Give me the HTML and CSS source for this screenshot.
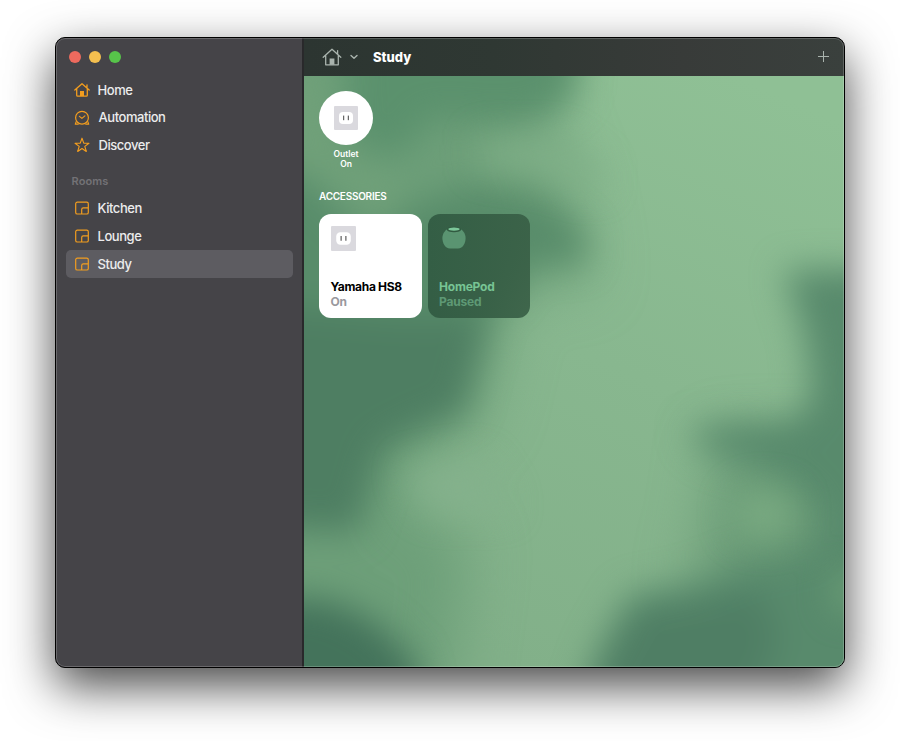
FILE: index.html
```html
<!DOCTYPE html>
<html lang="en">
<head>
<meta charset="utf-8">
<title>Home</title>
<link rel="stylesheet" href="styles.css">
</head>
<body>
<svg class="symbols" width="0" height="0" aria-hidden="true">
  <symbol id="house" viewBox="0 0 20 20">
    <path d="M1.2 10.2 10 2.2l8.8 8M3.7 8.6v9.2h12.6V8.6M15.6 6.8V3.6" fill="none" stroke="currentColor" stroke-width="1.3" stroke-linecap="round" stroke-linejoin="round"/>
    <path d="M7.6 11.4h4.8v6.4H7.6z" fill="currentColor"/>
  </symbol>
  <symbol id="room" viewBox="0 0 16 16">
    <rect x="1.7" y="2.2" width="12.6" height="11.8" rx="1.6" fill="none" stroke="currentColor" stroke-width="1.2"/>
    <path d="M14.2 7.9H9.3a1.6 1.6 0 0 0-1.6 1.6V14" fill="none" stroke="currentColor" stroke-width="1.2"/>
  </symbol>
  <symbol id="outlet" viewBox="0 0 24 24">
    <rect width="24" height="24" rx="1" fill="#dad9de"/>
    <rect x="5" y="6" width="14" height="12" rx="4" fill="#fff"/>
    <path d="M9.7 9.6v4.6M14.3 9.6v4.6" stroke="#444" stroke-width="1"/>
  </symbol>
</svg>

<div class="window">
  <aside class="sidebar">
    <div class="lights"><i class="red"></i><i class="yellow"></i><i class="green"></i></div>
    <nav>
      <a class="item"><svg viewBox="0 0 16 16" fill="none" stroke="currentColor" stroke-width="1.3" stroke-linecap="round" stroke-linejoin="round"><path d="M.8 8 8 1.7 15.2 8M2.7 6.8v6.400q0 1 1 1h8.600q1 0 1-1V6.800M13 5.200V2.800"/><path d="M6 9h4v5H6z" fill="currentColor" stroke="none"/></svg><span>Home</span></a>
      <a class="item wide"><svg viewBox="0 0 16 16" fill="none" stroke="currentColor" stroke-width="1.2" stroke-linecap="round" stroke-linejoin="round"><circle cx="8" cy="7.7" r="6.4"/><path d="M5.4 6.4l2.500 2 3-2.500M2.200 11.600 1.300 14.100h3M13.800 11.600l.9 2.500h-3"/></svg><span>Automation</span></a>
      <a class="item wide"><svg viewBox="0 0 16 16" fill="none" stroke="currentColor" stroke-width="1.15" stroke-linejoin="round"><path d="M8 1.2l1.75 4.9 5.2.15-4.15 3.15 1.5 5L8 11.5l-4.3 2.9 1.5-5L1.05 6.25l5.2-.15z"/></svg><span>Discover</span></a>
      <h2>Rooms</h2>
      <a class="item"><svg><use href="#room"/></svg><span>Kitchen</span></a>
      <a class="item"><svg><use href="#room"/></svg><span>Lounge</span></a>
      <a class="item selected"><svg><use href="#room"/></svg><span>Study</span></a>
    </nav>
  </aside>

  <main class="main">
    <header class="toolbar">
      <svg class="home"><use href="#house"/></svg>
      <svg class="chevron" viewBox="0 0 8 6"><path d="M1 1.4l3 2.9 3-2.9" fill="none" stroke="currentColor" stroke-width="1.4" stroke-linecap="round" stroke-linejoin="round"/></svg>
      <h1>Study</h1>
      <svg class="plus" viewBox="0 0 11 11"><path d="M5.5 0v11M0 5.5h11" stroke="currentColor"/></svg>
    </header>

    <section class="content">
      <svg class="wallpaper" viewBox="304 76 540 591" preserveAspectRatio="none">
        <defs>
          <linearGradient id="base" x1="0.8" y1="0" x2="0.4" y2="1">
            <stop offset="0" stop-color="#8fc095"/>
            <stop offset="0.5" stop-color="#88b78f"/>
            <stop offset="1" stop-color="#82b089"/>
          </linearGradient>
          <filter id="soft" filterUnits="userSpaceOnUse" x="150" y="-50" width="850" height="850" color-interpolation-filters="sRGB"><feGaussianBlur stdDeviation="17"/></filter>
          <filter id="softer" filterUnits="userSpaceOnUse" x="100" y="-100" width="950" height="950" color-interpolation-filters="sRGB"><feGaussianBlur stdDeviation="28"/></filter>
        </defs>
        <rect x="304" y="76" width="540" height="591" fill="url(#base)"/>
        <g filter="url(#softer)">
          <path d="M200 0H560L540 110 570 180 590 280 510 290 480 420 440 450 400 500 470 540 440 760H200z" fill="#6d9f79"/>
          <path d="M720 440 710 520 690 590 860 590 860 440z" fill="#699a76"/>
        </g>
        <g filter="url(#soft)">
          <path d="M345 20H580L576 95 545 118 500 124 430 118 405 155 350 150z" fill="#5b916d"/>
          <path d="M200 165 304 175 370 240 420 200 480 185 545 202 586 236 582 264 530 262 512 290 470 330 300 330 200 340z" fill="#588c6a"/>
          <path d="M200 300 400 318 490 318 475 370 465 412 420 430 382 450 358 532 200 524z" fill="#4e7e62"/>
          <path d="M200 595 330 600 375 622 415 660 420 720 200 720z" fill="#44735b"/>
          <path d="M784 270 900 268V720H574L597 652 630 594 690 583 750 560 806 550 822 522 800 490 760 468 710 452 686 430 730 424 790 424 812 400 806 340z" fill="#588a6c"/>
          <path d="M635 612 700 600 760 590 780 640 740 720 584 720 608 650z" fill="#4f7e64"/>
          <path d="M200 60H320L335 130 390 180 408 210 375 215 325 175 200 150z" fill="#70a079"/>
        </g>
        <g filter="url(#soft)">
          <ellipse cx="764" cy="514" rx="30" ry="24" fill="#7aab82"/>
          <ellipse cx="850" cy="592" rx="16" ry="20" fill="#6fa278"/>
          <path d="M480 140 560 140 600 170 600 190 540 172 480 165z" fill="#80b088"/>
          <path d="M405 470 480 460 510 510 430 510z" fill="#84b18c"/>
        </g>
      </svg>

      <div class="status">
        <div class="bubble"><svg><use href="#outlet"/></svg></div>
        <p>Outlet<br>On</p>
      </div>
      <h3>ACCESSORIES</h3>
      <div class="tiles">
        <article class="tile on">
          <svg class="outlet"><use href="#outlet"/></svg>
          <strong>Yamaha HS8</strong><span>On</span>
        </article>
        <article class="tile off">
          <svg class="pod" viewBox="0 0 24 24">
            <path d="M6 2.5C2.7 4.5.4 8.2.4 12c0 4.800 2.500 10.500 7.600 10.500h8c5.100 0 7.600-5.700 7.600-10.500C23.600 8.200 21.300 4.500 18 2.500z" fill="#5a9471"/>
            <ellipse cx="12" cy="3.5" rx="7.3" ry="2.7" fill="#315a41"/>
            <ellipse cx="12" cy="3.1" rx="5.7" ry="1.7" fill="#7cc799"/>
          </svg>
          <strong>HomePod</strong><span>Paused</span>
        </article>
      </div>
    </section>
  </main>
</div>
</body>
</html>
```
FILE: styles.css
```css
* { box-sizing: border-box; }

body {
  margin: 0;
  height: 741px;
  padding: 37px 0 0 55px;
  overflow: hidden;
  background: #fff;
  font-family: Inter, "Liberation Sans", sans-serif;
}

h1, h2, h3, p { margin: 0; }
svg { display: block; flex: none; }
.symbols { position: absolute; }

.window {
  position: relative;
  display: flex;
  width: 790px;
  height: 631px;
  border: 1px solid #000;
  border-radius: 10px;
  overflow: hidden;
  background: #252628;
  box-shadow: 0 18px 48px rgba(0, 0, 0, .72);
}

/* Hairline highlight along the inside of the window frame */
.window::after {
  content: "";
  position: absolute;
  inset: 0;
  border: 1px solid rgba(255, 255, 255, .2);
  border-radius: 9px;
  pointer-events: none;
}

.sidebar {
  width: 248px;
  padding: 13px 10px 0;
  border-right: 2px solid #29292b;
  background: #454448;
}

.lights { display: flex; gap: 8px; padding-left: 3px; }
.lights i { width: 12px; height: 12px; border-radius: 50%; }
.red { background: #ed6a5e; }
.yellow { background: #f4bf4f; }
.green { background: #57c44a; }

nav { padding-top: 13px; }

.item {
  display: flex;
  align-items: center;
  width: 227px;
  height: 27.8px;
  padding-left: 8px;
  border-radius: 5px;
  color: #ececed;
  font-size: 13px;
  font-weight: 500;
  letter-spacing: -.45px;
}
.item span { padding-bottom: .5px; }
.item svg { width: 16px; height: 16px; margin-right: 7.5px; color: #f29d1f; }
.item.wide svg { margin-right: 8.5px; }
.item.selected { background: #5d5c61; }

.sidebar h2 {
  height: 35px;
  padding: 14px 0 0 5.5px;
  color: #737276;
  font-size: 11px;
  line-height: 16px;
  font-weight: 600;
  letter-spacing: .1px;
}

.main { display: flex; flex-direction: column; flex: 1; }

.toolbar {
  display: flex;
  align-items: center;
  height: 38px;
  padding: 0 15px 0 18px;
  background: linear-gradient(90deg, #2c3531, #2f3833 35%, #383b39 70%, #3a403d);
  color: #a9b3ad;
}
.home { width: 20px; height: 20px; }
.chevron { width: 8px; height: 6px; margin-left: 7.5px; }
.toolbar h1 { margin-left: 15.5px; color: #fff; font-size: 13px; font-weight: 800; }
.plus { width: 11px; height: 11px; margin: 0 0 1px auto; }

.content {
  position: relative;
  z-index: 0;
  flex: 1;
  padding: 15px;
  overflow: hidden;
}
.wallpaper { position: absolute; inset: 0; z-index: -1; width: 100%; height: 100%; }

.status { width: 54px; text-align: center; }
.bubble {
  display: grid;
  place-items: center;
  width: 54px;
  height: 54px;
  border-radius: 50%;
  background: #fff;
}
.bubble svg { width: 24px; height: 24px; }
.status p { padding-top: 4px; color: #fff; font-size: 8.5px; line-height: 10px; font-weight: 600; }

.content h3 {
  margin-top: 20px;
  color: #fff;
  font-size: 10px;
  line-height: 14px;
  font-weight: 600;
  letter-spacing: -.25px;
}

.tiles { display: flex; gap: 6px; margin-top: 11px; }
.tile {
  display: flex;
  flex-direction: column;
  width: 103px;
  height: 104px;
  padding: 12px 11px 9px 11.5px;
  border-radius: 12px;
  font-size: 12px;
  line-height: 14.5px;
  font-weight: 700;
  white-space: nowrap;
}
.tile strong { margin-top: auto; font-weight: 700; letter-spacing: -.3px; }
.tile span { letter-spacing: -.2px; }
.tile.on { background: #fff; color: #9a999d; }
.tile.on strong { color: #000; }
.tile.off { width: 102px; padding-left: 11px; background: linear-gradient(90deg, rgba(48, 89, 65, .9), rgba(56, 94, 69, .9)); color: #5e9975; }
.tile.off strong { color: #77c494; letter-spacing: -.2px; }
.outlet { width: 25px; height: 25px; }
.pod { width: 24px; height: 24px; margin-left: 3px; }
```
